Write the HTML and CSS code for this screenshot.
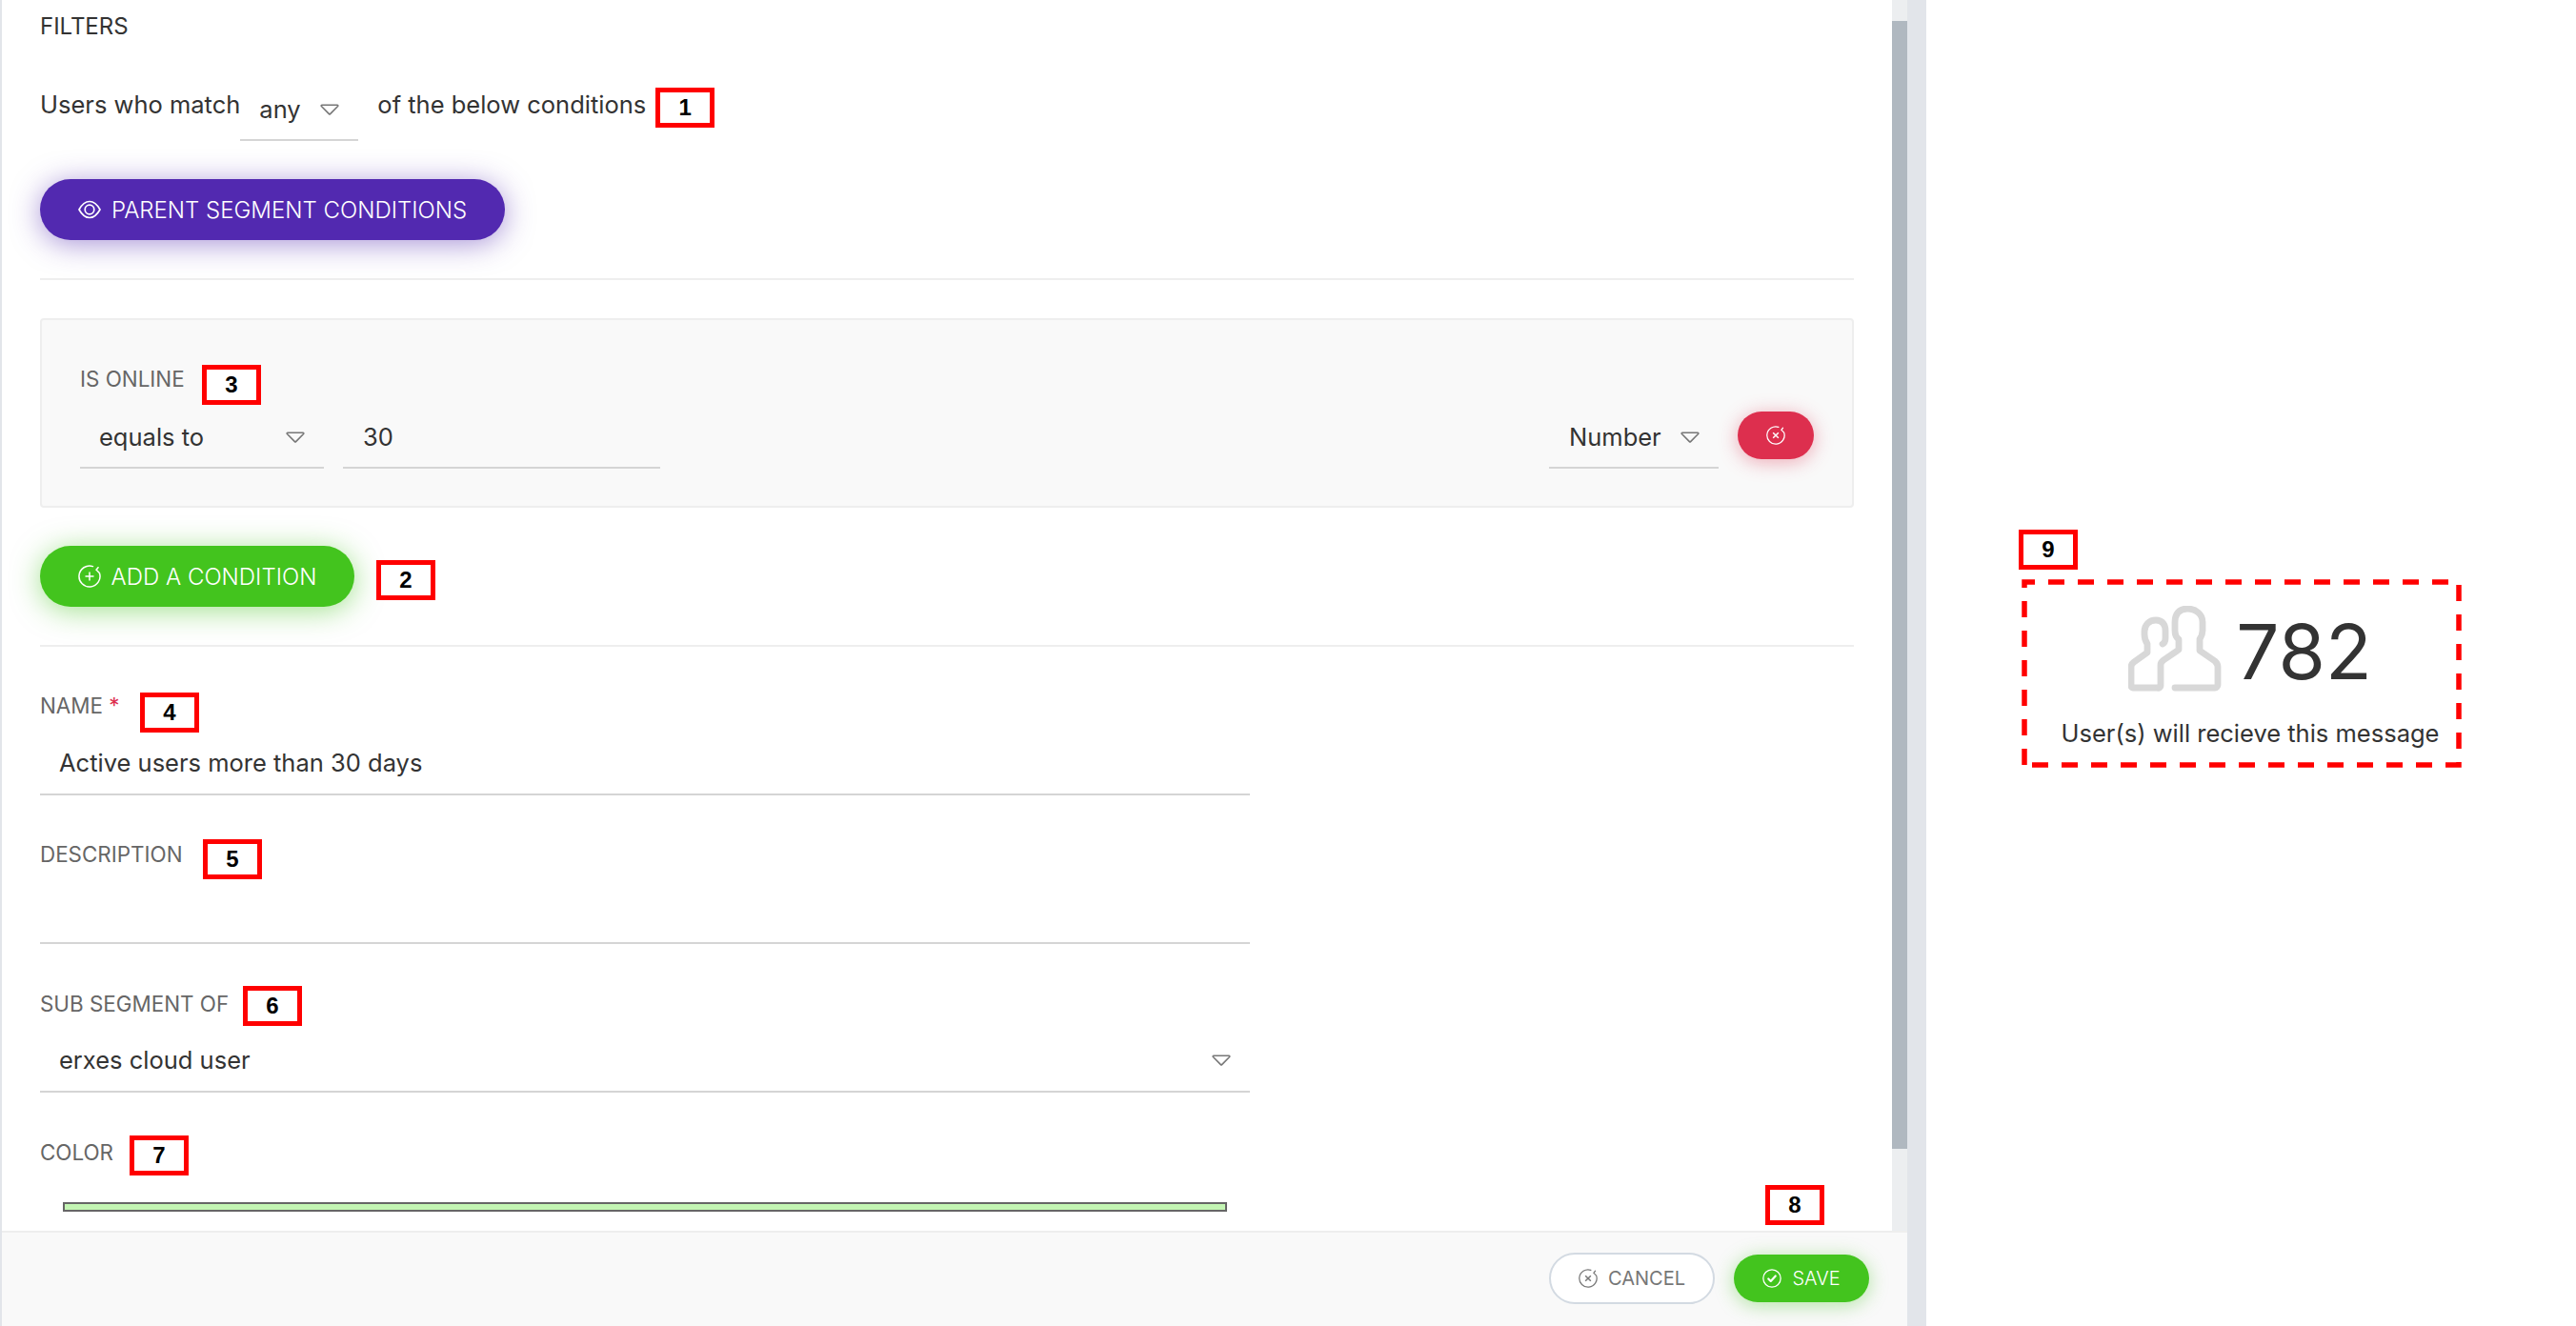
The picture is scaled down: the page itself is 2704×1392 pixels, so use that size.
FILE: index.html
```html
<!DOCTYPE html>
<html lang="en">
<head>
<meta charset="utf-8">
<title>Segment filters</title>
<link rel="stylesheet" href="styles.css">
</head>
<body>
<svg class="defs" width="0" height="0" aria-hidden="true">
  <symbol id="caret" viewBox="0 0 20 12"><path d="M2 1.200h16a.8.8 0 0 1 .6 1.300L10.600 10.600a.9.9 0 0 1-1.200 0L1.400 2.500A.8.8 0 0 1 2 1.200z" fill="none" stroke="currentColor" stroke-width="1.600" stroke-linejoin="round"/></symbol>
  <symbol id="ring" viewBox="0 0 24 24"><path d="M15.500 1.600A11 11 0 1 0 22.400 8.500L19.200 5.300M19 5.200 21 2.700" fill="none" stroke="currentColor" stroke-width="1.500" stroke-linecap="round" stroke-linejoin="round"/></symbol>
</svg>

<div class="page">
  <main class="editor">
    <div class="editor-body">
      <div class="form-area">
        <h2 class="section-title">FILTERS</h2>

        <div class="match-row">
          <span class="match-text">Users who match</span>
          <div class="select select-any"><span>any</span><svg class="caret"><use href="#caret"/></svg></div>
          <span class="match-text">of the below conditions</span>
          <span class="tag tag-inline tag-1">1</span>
        </div>

        <button class="btn btn-large btn-purple" type="button">
          <svg class="btn-icon" viewBox="0 0 24 24"><path d="M1 12C4 6.600 7.800 3.500 12 3.500S20 6.600 23 12C20 17.400 16.200 20.500 12 20.500S4 17.400 1 12Z" fill="none" stroke="currentColor" stroke-width="1.700" stroke-linejoin="round"/><circle cx="12" cy="12" r="4.800" fill="none" stroke="currentColor" stroke-width="1.700"/></svg>PARENT SEGMENT CONDITIONS
        </button>
        <hr class="rule rule-first">

        <section class="condition">
          <div class="field-label condition-label">IS ONLINE<span class="tag tag-3">3</span></div>
          <div class="condition-row">
            <div class="select select-op"><span>equals to</span><svg class="caret"><use href="#caret"/></svg></div>
            <div class="input input-value">30</div>
            <div class="select select-type"><span>Number</span><svg class="caret"><use href="#caret"/></svg></div>
            <button class="btn btn-remove" type="button" aria-label="Remove">
              <svg class="btn-icon-small" viewBox="0 0 24 24"><use href="#ring"/><path d="M8.600 8.600l6.800 6.800m0-6.800l-6.800 6.800" fill="none" stroke="currentColor" stroke-width="1.800"/></svg>
            </button>
          </div>
        </section>

        <div class="add-row">
          <button class="btn btn-large btn-green" type="button">
            <svg class="btn-icon" viewBox="0 0 24 24"><use href="#ring"/><path d="M12 7.500v9m-4.500-4.500h9" fill="none" stroke="currentColor" stroke-width="1.500"/></svg>ADD A CONDITION
          </button>
          <span class="tag tag-inline tag-2">2</span>
        </div>
        <hr class="rule rule-second">

        <div class="field field-name">
          <div class="field-label">NAME <span class="required">*</span><span class="tag tag-4">4</span></div>
          <div class="input input-wide">Active users more than 30 days</div>
        </div>
        <div class="field field-desc">
          <div class="field-label">DESCRIPTION<span class="tag tag-5">5</span></div>
          <div class="input input-wide input-empty"></div>
        </div>
        <div class="field field-sub">
          <div class="field-label">SUB SEGMENT OF<span class="tag tag-6">6</span></div>
          <div class="select select-wide"><span>erxes cloud user</span><svg class="caret"><use href="#caret"/></svg></div>
        </div>
        <div class="field field-color">
          <div class="field-label">COLOR<span class="tag tag-7">7</span></div>
          <div class="swatch"></div>
        </div>
      </div>
      <div class="scroll-track"><div class="scroll-thumb"></div></div>
    </div>

    <footer class="editor-footer">
      <span class="tag tag-8">8</span>
      <button class="btn btn-small btn-cancel" type="button">
        <svg class="btn-icon-small" viewBox="0 0 24 24"><use href="#ring"/><path d="M8.600 8.600l6.800 6.800m0-6.800l-6.800 6.800" fill="none" stroke="currentColor" stroke-width="1.800"/></svg>CANCEL
      </button>
      <button class="btn btn-small btn-save" type="button">
        <svg class="btn-icon-small" viewBox="0 0 24 24"><circle cx="12" cy="12" r="11" fill="none" stroke="currentColor" stroke-width="1.500"/><path d="M7.500 12.500l3 3 6-6.500" fill="none" stroke="currentColor" stroke-width="2.600" stroke-linecap="round" stroke-linejoin="round"/></svg>SAVE
      </button>
    </footer>
  </main>
  <div class="gutter"></div>

  <aside class="preview">
    <span class="tag tag-9">9</span>
    <div class="reach">
      <svg class="dash-frame" viewBox="0 0 462 198"><path d="M3 195V3H459V195Z" fill="none" stroke="#f00" stroke-width="5.500" stroke-dasharray="17 14"/></svg>
      <div class="reach-count">
        <svg class="users-icon" viewBox="0 0 98 90">
          <path d="M32 86H5a2 2 0 0 1-2-2V64c0-2 1-3.500 3-5L20 49V40c-2-3-3-6-3-10V27c0-7 5-12 12-12s10 5 10 11v8c0 3-1 5-3 6" fill="none" stroke="#d8d8d8" stroke-width="6.800" stroke-linecap="round" stroke-linejoin="round"/>
          <path d="M49 86H91a3 3 0 0 0 3-3V64c0-3-1-4-3-6L75 47V35c2-3 3-6 3-9V17C78 9 71 3 62 3S49 9 49 17V26c0 4 1 7 4 9V46L37 57c-2 1.500-3 3-3 5V84c0 1-1 2-2 2" fill="none" stroke="#d8d8d8" stroke-width="6.800" stroke-linecap="round" stroke-linejoin="round"/>
        </svg>
        <span class="count">782</span>
      </div>
      <p class="reach-text">User(s) will recieve this message</p>
    </div>
  </aside>
</div>
</body>
</html>
```

FILE: styles.css
```css
* { box-sizing: border-box; }
html, body { margin: 0; height: 100%; }
body {
  font-family: Inter, "Liberation Sans", sans-serif;
  color: #333;
  background: #fff;
  overflow: hidden;
}
.defs { position: absolute; }

.page { display: flex; width: 2704px; height: 1392px; }
.editor {
  width: 2002px;
  display: flex;
  flex-direction: column;
  border-left: 2px solid #e2e5ea;
}
.gutter { width: 20px; background: #e2e5ea; }
.editor-body { flex: 1; display: flex; min-height: 0; overflow: hidden; }
.form-area { flex: 1; padding: 0 40px; position: relative; min-width: 0; }

.scroll-track { width: 16px; padding: 22px 0 86px; background: #eceef0; }
.scroll-thumb { height: 100%; background: #b0b8c0; }

.section-title {
  margin: 0;
  padding-top: 14px;
  font-size: 24px;
  line-height: 28px;
  font-weight: 400;
}

.match-row {
  display: flex;
  align-items: flex-start;
  margin-top: 43px;
  font-size: 25.500px;
  line-height: 42px;
  height: 103px;
}
.match-text { padding-top: 4px; }
.select, .input {
  border-bottom: 2px solid #d5d5d5;
  font-size: 25.500px;
  line-height: 40px;
  color: #333;
}
.select { display: flex; align-items: center; justify-content: space-between; }
.input { display: flex; align-items: center; }
.caret { width: 20px; height: 12px; color: #777; flex: none; }
.select-any { width: 124px; height: 63px; margin: 0 20px 0 0; padding: 0 20px 2px; }

.btn {
  display: inline-flex;
  align-items: center;
  justify-content: center;
  border: 0;
  font-family: inherit;
  padding: 0;
  color: #fff;
  white-space: nowrap;
}
.btn-large { height: 64px; border-radius: 32px; font-size: 24px; font-weight: 300; }
.btn-icon { width: 24px; height: 24px; margin-right: 11px; flex: none; }
.btn-icon-small { width: 20px; height: 20px; flex: none; }
.btn-purple { background: #5229b0; width: 488px; box-shadow: 0 4px 30px rgba(82, 41, 176, .5); }
.btn-green { background: #43c41e; width: 330px; box-shadow: 0 4px 30px rgba(67, 196, 30, .5); }

.rule { border: 0; height: 2px; background: #eee; margin: 0; }
.rule-first { margin-top: 40px; }
.rule-second { margin-top: 40px; }

.condition {
  position: relative;
  margin-top: 40px;
  height: 199px;
  padding: 0 40px;
  background: #f9f9f9;
  border: 2px solid #eee;
  border-radius: 4px;
}
.field-label {
  position: relative;
  font-size: 22.400px;
  line-height: 28px;
  color: #666;
}
.condition-label { padding-top: 48px; height: 76px; }
.condition-row { display: flex; align-items: flex-start; margin-top: 26px; }
.condition-row .select, .condition-row .input { height: 54px; padding-bottom: 10px; }
.select-op { width: 256px; padding: 0 20px; margin-right: 20px; }
.input-value { width: 333px; padding-left: 21px; }
.select-type { width: 178px; padding: 0 20px 0 21px; margin-left: auto; margin-right: 20px; }
.btn-remove {
  width: 80px;
  height: 50px;
  margin-top: -6px;
  border-radius: 25px;
  background: #dd2f4e;
  box-shadow: 0 3px 20px rgba(221, 47, 78, .4);
}

.add-row { margin-top: 40px; display: flex; }

.required { color: #dd2f4e; }
.field { width: 1270px; position: relative; }
.field-name { margin-top: 48px; }
.field-desc { margin-top: 48px; }
.field-sub { margin-top: 49px; }
.field-color { margin-top: 49px; }
.field .field-label { height: 28px; }
.input-wide { margin-top: 22px; height: 58px; padding: 0 20px 9px; }
.input-empty { margin-top: 15px; height: 65px; }
.select-wide { margin-top: 19px; height: 60px; padding: 0 20px 6px; }
.swatch {
  margin: 38px 24px 0;
  height: 10px;
  border: 2px solid #666;
  background: #c3f5b3;
}

.editor-footer {
  position: relative;
  height: 100px;
  flex: none;
  display: flex;
  justify-content: flex-end;
  align-items: center;
  gap: 20px;
  padding: 0 40px 2px 0;
  background: #f9f9f9;
  border-top: 2px solid #eee;
}
.btn-small { height: 50px; border-radius: 25px; font-size: 20px; font-weight: 300; gap: 11px; }
.btn-cancel {
  width: 174px;
  height: 54px;
  border-radius: 27px;
  background: #fff;
  border: 2px solid #d3dae2;
  color: #777;
  font-weight: 400;
}
.btn-save { width: 142px; background: #43c41e; box-shadow: 0 3px 20px rgba(67, 196, 30, .4); }

.preview {
  position: relative;
  flex: 1;
  display: flex;
  justify-content: center;
  align-items: flex-start;
  padding: 608px 46px 0 26px;
}
.reach {
  position: relative;
  width: 462px;
  height: 198px;
  display: flex;
  flex-direction: column;
  align-items: center;
  padding: 28px 0 0 18px;
}
.dash-frame { position: absolute; inset: 0; width: 100%; height: 100%; }
.reach-count { display: flex; align-items: center; gap: 15px; height: 90px; }
.users-icon { width: 98px; height: 90px; }
.count { font-size: 80px; line-height: 90px; color: #333; font-weight: 400; padding-top: 5px; }
.reach-text { margin: 28px 0 0; font-size: 25.500px; line-height: 32px; color: #333; }

/* numbered review annotations sitting on top of the screenshot */
.tag {
  position: absolute;
  width: 62px;
  height: 42px;
  border: 5px solid #f00;
  background: #fff;
  color: #000;
  font: 700 24px/32px "Liberation Sans", sans-serif;
  text-align: center;
}
.tag-inline { position: static; flex: none; }
.tag-1 { margin: 7px 0 0 10px; }
.tag-2 { margin: 15px 0 0 23px; }
.tag-3 { left: 128px; top: 47px; }
.tag-4 { left: 105px; top: 0; }
.tag-5 { left: 171px; top: -2px; }
.tag-6 { left: 213px; top: -5px; }
.tag-7 { left: 94px; top: -4px; }
.tag-8 { right: 87px; top: -50px; }
.tag-9 { left: 97px; top: 556px; }
```
